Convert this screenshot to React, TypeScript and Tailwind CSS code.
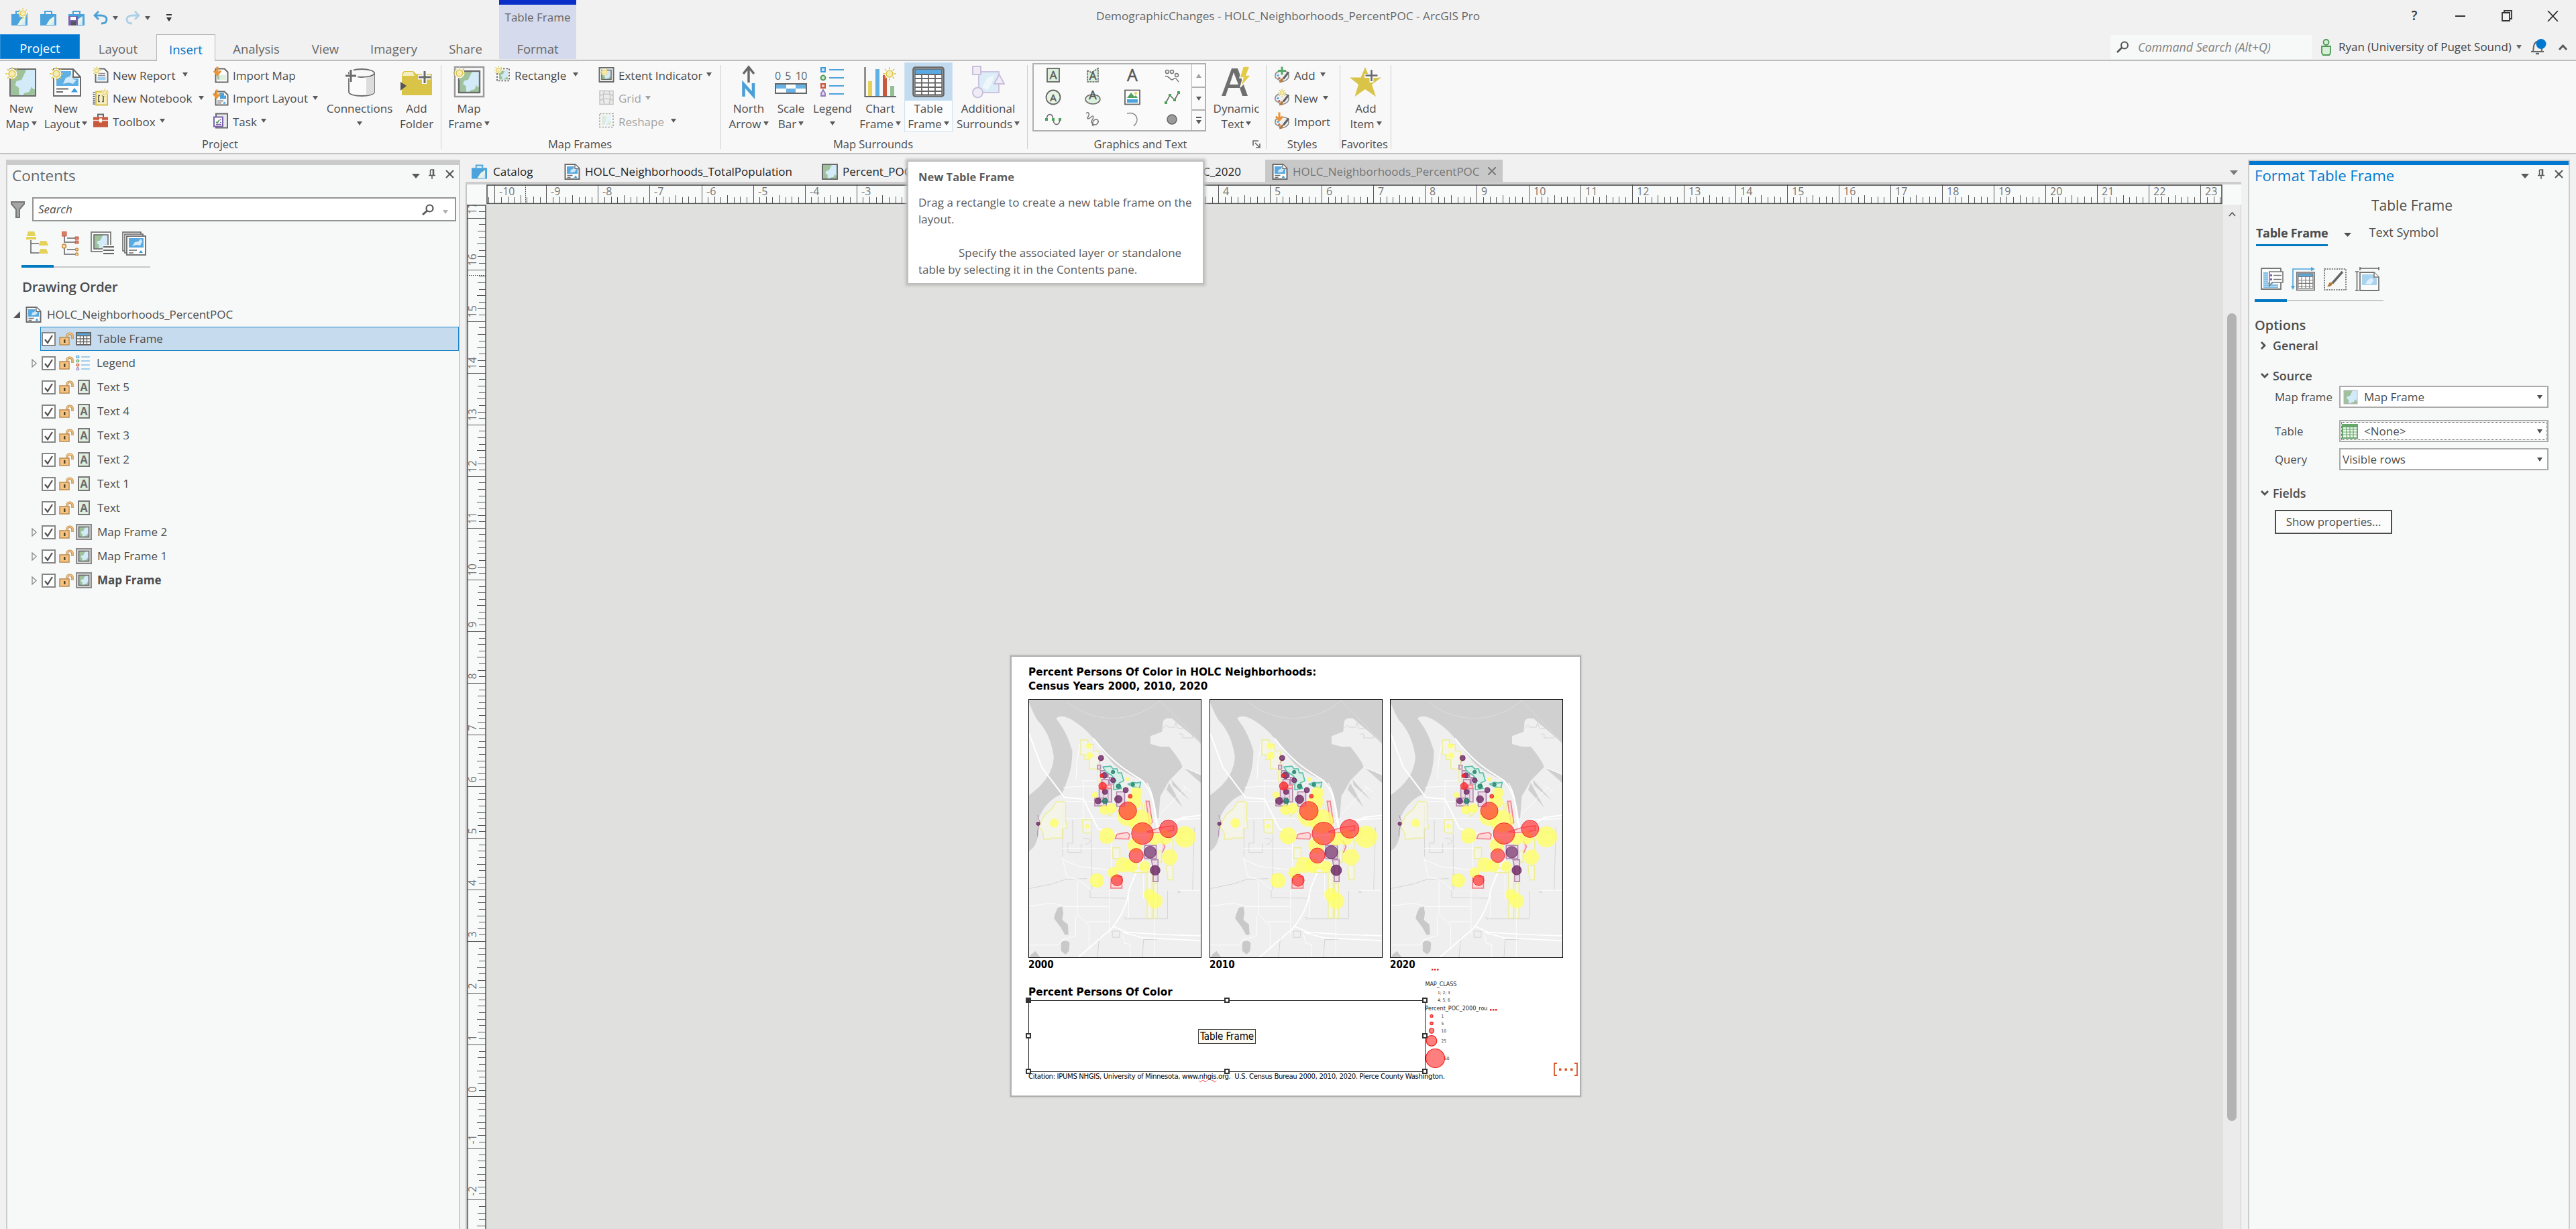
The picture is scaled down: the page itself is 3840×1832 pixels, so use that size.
import React from "react";

/* ---------- shared glyphs ---------- */

const GRAY = "#6a6a6a";

function Caret({ className = "text-[#5a5a5a]" }: { className?: string }) {
  return (
    <svg width="8" height="6" viewBox="0 0 8 6" className={`shrink-0 ${className}`}>
      <path d="M0 0h8l-4 6z" fill="currentColor" />
    </svg>
  );
}

function Sun({ x, y, r = 5 }: { x: number; y: number; r?: number }) {
  const rays = [0, 45, 90, 135, 180, 225, 270, 315];
  return (
    <g transform={`translate(${x} ${y})`}>
      <circle r={r * 1.5} fill="#fbfbf8" />
      {rays.map((a) => (
        <path key={a} d={`M0 ${-r * 1.35}V${-r * 1.95}`} transform={`rotate(${a})`} stroke="#d8c24a" strokeWidth={r * 0.34} />
      ))}
      <circle r={r} fill="#f7ecb0" stroke="#d8c24a" strokeWidth={r * 0.3} />
    </g>
  );
}

function MiniMap({ x, y, w, h, stroke = GRAY, sw = 2 }: { x: number; y: number; w: number; h: number; stroke?: string; sw?: number }) {
  return (
    <g transform={`translate(${x} ${y})`}>
      <rect width={w} height={h} fill="#9dc29c" />
      <path
        transform={`scale(${w / 20} ${h / 20})`}
        d="M13 0h7v15l-2 0-1-2-2 4-4 1-1 2-3-1 0-5-3-2 1-3 4-1 2-4 1-2z"
        fill="#d3eaf8"
      />
      <rect width={w} height={h} fill="none" stroke={stroke} strokeWidth={sw} />
    </g>
  );
}

function LayoutPage({ size, className = "" }: { size: number; className?: string }) {
  return (
    <svg width={size} height={size} viewBox="0 0 24 24" className={`shrink-0 ${className}`}>
      <path d="M1.500 1h15l6 6v16h-21z" fill="#fdfdfd" stroke={GRAY} strokeWidth="2" />
      <path d="M16 1v6.500h6.500" fill="#fdfdfd" stroke={GRAY} strokeWidth="1.300" />
      <path d="M4 4h11v4h5v7H4z" fill="#5aa9e0" />
      <path d="M9 13l1-4 3-1 2-3v3h3l-2 4-4 1z" fill="#cfe8f8" />
      <path d="M4.500 17.500h8M4.500 20.500h5" stroke={GRAY} strokeWidth="1.500" />
      <path d="M14.500 21l2.500-3.500 2.500 3.500z" fill="#3d9bdc" />
    </svg>
  );
}

function NewMapIcon() {
  return (
    <svg width="48" height="48" viewBox="0 0 48 48">
      <MiniMap x={7} y={5} w={38} h={40} />
      <Sun x={10} y={12} r={5} />
    </svg>
  );
}
function NewLayoutIcon() {
  return (
    <svg width="48" height="48" viewBox="0 0 48 48">
      <path d="M6 5h29l11 12v28H6z" fill="#fdfdfd" stroke={GRAY} strokeWidth="2" />
      <path d="M35 5v12h11" fill="none" stroke={GRAY} strokeWidth="2" />
      <path d="M10 8h22v11h11v11H10z" fill="#5fb0e4" />
      <path d="M20 27l4-9 6-2 3-5 1 9 6 1-5 6-7-2z" fill="#d3eaf8" />
      <path d="M10 34.500h18M10 39h10" stroke={GRAY} strokeWidth="2.200" />
      <path d="M32 39.500l5-6.500 5 6.500z" fill="#3d9bdc" />
      <Sun x={10} y={12} r={5} />
    </svg>
  );
}
function ConnectionsIcon() {
  return (
    <svg width="48" height="48" viewBox="0 0 48 48">
      <path d="M8 11v28c0 4 9 6 19 6s19-2 19-6V11z" fill="#fbfbfb" stroke={GRAY} strokeWidth="1.800" />
      <path d="M34 16v28c8-1 12-3 12-5V11z" fill="#dcdcdc" />
      <ellipse cx="27" cy="11" rx="19" ry="6" fill="#f8f8f8" stroke={GRAY} strokeWidth="1.800" />
      <path d="M2 15.500h19M11.500 5v20" stroke="#fafafa" strokeWidth="6" />
      <path d="M3 15h16M11 6v18" stroke={GRAY} strokeWidth="3" />
    </svg>
  );
}
function AddFolderIcon() {
  return (
    <svg width="50" height="48" viewBox="0 0 50 48">
      <path d="M3 44V12l3-4h14l4 4h24v32z" fill="#d9c447" />
      <path d="M4 13l3-4h12l3 6H4z" fill="#f6eec0" />
      <path d="M1 24l9 6-9 7z" fill="#555" />
      <path d="M27 17h19M36.500 8v19" stroke="#fafafa" strokeWidth="7" />
      <path d="M28 17h18M37 8v18" stroke={GRAY} strokeWidth="3" />
    </svg>
  );
}
function MapFrameBigIcon() {
  return (
    <svg width="48" height="50" viewBox="0 0 48 50">
      <rect x="3" y="3" width="43" height="44" fill="#fbfbfb" stroke="#9a9a9a" strokeWidth="2.500" />
      <MiniMap x={9} y={9} w={31} h={32} sw={2.4} />
      <Sun x={10} y={12} r={5} />
    </svg>
  );
}
function NorthArrowIcon() {
  return (
    <svg width="30" height="50" viewBox="0 0 30 50">
      <path d="M15 26V4M7 13l8-10 8 10" fill="none" stroke="#666" strokeWidth="3.400" />
      <path d="M7.500 47V28.500L22 45V27" fill="none" stroke="#4b9fd8" strokeWidth="4.600" />
    </svg>
  );
}
function ScaleBarIcon() {
  return (
    <div className="flex w-[50px] flex-col items-center">
      <div className="flex w-[48px] justify-between text-[16px] leading-[17px] text-[#666]">
        <span>0</span>
        <span>5</span>
        <span className="tracking-[-0.500px]">10</span>
      </div>
      <div className="mt-[2px] grid h-[16px] w-[48px] grid-cols-3 grid-rows-2 border-2 border-[#666] bg-white">
        <i className="bg-[#67b1e4]" />
        <i />
        <i className="bg-[#67b1e4]" />
        <i />
        <i className="bg-[#67b1e4]" />
        <i />
      </div>
    </div>
  );
}
function LegendIcon({ w = 38, h = 48 }: { w?: number; h?: number }) {
  return (
    <svg width={w} height={h} viewBox="0 0 38 48" preserveAspectRatio="none" className="shrink-0">
      <rect x="2" y="3" width="6" height="6" fill="#cfe8f8" stroke="#3d9bdc" strokeWidth="2" />
      <circle cx="5" cy="18" r="3.400" fill="#cfe8cf" stroke="#4d9a55" strokeWidth="2" />
      <rect x="2" y="27" width="6" height="6" fill="#f4c9bb" stroke="#c4573a" strokeWidth="2" />
      <path d="M2 45v-4l3-5 3 5v4z" fill="#ddd3ee" stroke="#8d77b8" strokeWidth="1.800" />
      <path d="M14 6h22M14 18h22M14 30h22M14 42h22" stroke="#4ba3dd" strokeWidth="2.200" />
    </svg>
  );
}
function ChartIcon() {
  return (
    <svg width="50" height="50" viewBox="0 0 50 50">
      <path d="M7 24h6v22H7z" fill="#e4d25a" />
      <path d="M18 6h6v40h-6z" fill="#5fb0e4" />
      <path d="M29 15h6v31h-6z" fill="#c9593d" />
      <path d="M40 31h6v15h-6z" fill="#93bf94" />
      <path d="M2.500 3v44H49" fill="none" stroke="#666" strokeWidth="2.200" />
      <Sun x={39} y={13} r={5} />
    </svg>
  );
}
function TableGlyph({ w, h, className = "" }: { w: number; h: number; className?: string }) {
  return (
    <svg width={w} height={h} viewBox="0 0 48 46" preserveAspectRatio="none" className={`shrink-0 ${className}`}>
      <rect x="1.500" y="1.500" width="45" height="43" rx="3" fill="#fff" stroke="#666" strokeWidth="2.600" />
      <rect x="4" y="4" width="40" height="7" fill="#5aa9e0" />
      <path d="M4 12h40M4 18h40M4 24.500h40M4 31h40M4 37h40M14 12v31M24 12v31M34 12v31" stroke="#666" strokeWidth="1.800" />
      <rect x="4" y="4" width="40" height="38" fill="none" stroke="#666" strokeWidth="1.500" />
    </svg>
  );
}
function SmallTableGlyph() {
  return (
    <svg width="23" height="20" viewBox="0 0 23 20" className="ml-[3px] shrink-0">
      <rect x="1" y="1" width="21" height="18" fill="#fff" />
      <rect x="1" y="1" width="21" height="4" fill="#5aa9e0" />
      <path d="M1 5.500h21M1 10h21M1 14.500h21M6.500 5v14M11.500 5v14M16.500 5v14" stroke="#666" strokeWidth="1.300" />
      <rect x="1" y="1" width="21" height="18" fill="none" stroke="#666" strokeWidth="2" />
    </svg>
  );
}
function SurroundsIcon() {
  return (
    <svg width="50" height="50" viewBox="0 0 50 50">
      <rect x="11" y="10" width="30" height="31" fill="#dcedf7" stroke="#cdc3e0" strokeWidth="2" />
      <path d="M16 33l8-14 10-4-4 13-6 9z" fill="#f0f7fc" />
      <rect x="2" y="2" width="12" height="12" fill="#f0ecf6" stroke="#c9bfdd" strokeWidth="2" />
      <path d="M34 28l7.500-14L49 28z" fill="#f0ecf6" stroke="#c9bfdd" strokeWidth="2" />
      <circle cx="9.500" cy="41" r="7.500" fill="#f0ecf6" stroke="#c9bfdd" strokeWidth="2" />
    </svg>
  );
}
function DynamicTextIcon() {
  return (
    <svg width="48" height="50" viewBox="0 0 48 50">
      <path d="M2 46h6l4-12h17l4 12h8L26 5h-9zM14 29l6-18 7 18z" fill="#6e6e6e" fillRule="evenodd" />
      <path d="M34 2h10l-5 13h7L30 33l4-14h-5z" fill="#e2cb45" stroke="#fafafa" strokeWidth="1.500" />
    </svg>
  );
}
function StarIcon() {
  return (
    <svg width="50" height="50" viewBox="0 0 50 50">
      <path d="M24 3l6.500 15.500H48L34 29l6 18-16-11L8.500 47 14 29 1 18.500h16.500z" fill="#d9c447" />
      <path d="M23 16h21M33.500 5v21" stroke="#fafafa" strokeWidth="6" />
      <path d="M24.500 15.500h18M33.500 7v17" stroke={GRAY} strokeWidth="2.600" />
    </svg>
  );
}

/* small 24px icons of the ribbon rows */
function SmallIcon({ name }: { name: string }) {
  const page = <path d="M4.500 3h13l5 5v15h-18z" fill="#fdfdfd" stroke={GRAY} strokeWidth="2" />;
  const palette = (
    <g>
      <path d="M13 6C6 6 1 9 2 15c1 4 5 3 6 5s1 3 5 2c6-1 10-5 9-10-1-4-4-6-9-6z" fill="#f0f0f0" stroke="#8a8a8a" strokeWidth="1.600" />
      <circle cx="6" cy="13" r="1.600" fill="#4ba3dd" />
      <circle cx="8" cy="17" r="1.600" fill="#c9593d" />
      <path d="M22 8l-8 10" stroke="#5f5f5f" strokeWidth="3" />
      <path d="M15 17l-3 6-4 1 2-6z" fill="#b5793a" />
    </g>
  );
  const icons: Record<string, React.ReactNode> = {
    report: (
      <g>
        {page}
        <path d="M8 10h11M8 13h11" stroke="#8a8a8a" strokeWidth="1.300" />
        <rect x="7.500" y="15" width="12" height="5" fill="#9fd0ef" />
        <Sun x={6} y={6} r={3.2} />
      </g>
    ),
    notebook: (
      <g>
        <path d="M5 3h17v20H5z" fill="#f7efc0" stroke="#d8c24a" strokeWidth="2" />
        <path d="M2 4v19" stroke="#555" strokeWidth="3" strokeDasharray="1.500 1.300" />
        <path d="M11 9H9v9h2M14 9h2v9h-2" fill="none" stroke="#555" strokeWidth="1.600" />
        <Sun x={18} y={5} r={3.2} />
      </g>
    ),
    toolbox: (
      <g>
        <path d="M1 6h22v15H1z" fill="#c9593d" />
        <path d="M8 6V2h8v4" fill="none" stroke="#666" strokeWidth="2" />
        <path d="M1 11h22" stroke="#f2ddd6" strokeWidth="1.600" />
        <path d="M10 8h4v6h-4z" fill="#fff" />
      </g>
    ),
    importmap: (
      <g>
        {page}
        <path d="M7 12h13v8H7z" fill="#dff0df" />
        <path d="M7 13h3v6H7z" fill="#9dc29c" />
        <path d="M7 0v10M2 6l5 6 5-6" fill="none" stroke="#eb9438" strokeWidth="3.200" />
      </g>
    ),
    importlayout: (
      <g>
        {page}
        <path d="M10 5h7v4h3v5h-9z" fill="#4ba3dd" />
        <path d="M7 17h9M7 20h6" stroke={GRAY} strokeWidth="1.400" />
        <path d="M15 21l2.500-3 2.500 3z" fill="#3d9bdc" />
        <path d="M6 0v10M1 6l5 6 5-6" fill="none" stroke="#eb9438" strokeWidth="3" />
      </g>
    ),
    task: (
      <g>
        <path d="M5 1h17v21H5z" fill="#e9e9e9" stroke={GRAY} strokeWidth="2" />
        <path d="M2 6h13v14H2z" fill="#fff" stroke="#7a62ad" strokeWidth="2" />
        <path d="M5 13l2 2 3-5" fill="none" stroke="#4d9a55" strokeWidth="1.600" />
        <path d="M11 10h2M11 14h2M5 17h8" stroke="#7a62ad" strokeWidth="1.300" />
      </g>
    ),
    rectangle: (
      <g>
        <MiniMap x={7} y={6} w={13} h={13} sw={0} />
        <rect x="4" y="3" width="18" height="18" fill="none" stroke="#555" strokeWidth="1.600" strokeDasharray="2.500 2" />
        <Sun x={6} y={5} r={3.2} />
      </g>
    ),
    extent: (
      <g>
        <rect x="1.500" y="1.500" width="21" height="21" fill="#fff" stroke={GRAY} strokeWidth="2" />
        <MiniMap x={5} y={5} w={14} h={14} sw={1.6} />
        <Sun x={9} y={8} r={3.2} />
      </g>
    ),
    grid: (
      <g stroke="#c4c4c4" fill="none" strokeWidth="1.500">
        <rect x="2" y="2" width="20" height="20" fill="#ececec" />
        <path d="M2 9c6-3 14-3 20 0M2 16c6-3 14-3 20 0M9 2c-2 6-2 14 0 20M16 2c2 6 2 14 0 20" />
      </g>
    ),
    reshape: (
      <g>
        <rect x="5" y="4" width="14" height="14" fill="#dcebdc" />
        <path d="M12 4h7v8l-4 1-3 5-3-1 2-6z" fill="#e6f3fa" />
        <rect x="2" y="1" width="20" height="20" fill="none" stroke="#a0a0a0" strokeWidth="1.600" strokeDasharray="2.500 2" />
      </g>
    ),
    styleadd: (
      <g>
        {palette}
        <path d="M6 6h12M12 0v12" stroke="#52a866" strokeWidth="3" />
      </g>
    ),
    stylenew: (
      <g>
        {palette}
        <Sun x={12} y={5} r={3.2} />
      </g>
    ),
    styleimport: (
      <g>
        {palette}
        <path d="M8 -1v10M3 5l5 6 5-6" fill="none" stroke="#eb9438" strokeWidth="3" />
      </g>
    ),
  };
  return (
    <svg width="24" height="25" viewBox="0 0 24 24" className="-mt-[2px] shrink-0 overflow-visible">
      {icons[name]}
    </svg>
  );
}

/* ---------- ribbon ---------- */

type BigProps = { icon: React.ReactNode; lines: string[]; caret?: boolean; className?: string; active?: boolean };

function BigButton({ icon, lines, caret = true, className = "", active = false }: BigProps) {
  return (
    <div className={`mt-[2px] flex h-[104px] shrink-0 flex-col items-center ${active ? "border border-[#cfe2f2] bg-[#fafcfd]" : "border border-transparent"} ${className}`}>
      <div className={`flex h-[56px] w-full shrink-0 items-center justify-center ${active ? "bg-[#c3dbee]" : ""}`}>{icon}</div>
      {lines.map((t, i) => (
        <div key={i} className="flex h-[23px] items-center gap-[3px] whitespace-nowrap text-[17px] leading-[23px]">
          {t && <span>{t}</span>}
          {caret && i === lines.length - 1 && <Caret className="-mt-[2px] text-[#5a5a5a]" />}
        </div>
      ))}
    </div>
  );
}

function SmallRow({ icon, text, caret = true, gap = "gap-[10px]", dim = false }: { icon: string; text: string; caret?: boolean; gap?: string; dim?: boolean }) {
  return (
    <div className={`flex h-[34.5px] items-center whitespace-nowrap text-[17px] ${dim ? "text-[#a3a3a3]" : ""}`}>
      <SmallIcon name={icon} />
      <div className={`ml-[6px] flex items-center ${gap}`}>
        <span>{text}</span>
        {caret && <Caret className={dim && text === "Grid" ? "-mt-[2px] text-[#a3a3a3]" : "-mt-[2px] text-[#5a5a5a]"} />}
      </div>
    </div>
  );
}

function Group({ label, className, children, launcher = false }: { label: string; className: string; children: React.ReactNode; launcher?: boolean }) {
  return (
    <div className={`relative flex h-[137px] shrink-0 flex-col ${className}`}>
      <div className="flex h-[112px] shrink-0">{children}</div>
      <div className="flex h-[24px] items-center justify-center whitespace-nowrap pr-[4px] text-[16.500px]">{label}</div>
      <div className="absolute right-0 top-[6px] h-[125px] w-px bg-[#cfcfcf]" />
      {launcher && (
        <svg width="12" height="12" viewBox="0 0 12 12" className="absolute right-[9px] top-[118px]">
          <path d="M1 8V1h8M4 4l6 6M11 5v6H5" fill="none" stroke="#666" strokeWidth="1.600" />
        </svg>
      )}
    </div>
  );
}

function GalleryIcon({ i }: { i: number }) {
  const A = ({ y = 18, s = 17 }: { y?: number; s?: number }) => (
    <text x="12" y={y} fontSize={s} textAnchor="middle" fill="#555" stroke="#555" strokeWidth=".5">
      A
    </text>
  );
  const list: React.ReactNode[] = [
    <g><rect x="3" y="2" width="18" height="20" fill="#dcefdc" stroke="#666" strokeWidth="1.800" /><A /></g>,
    <g><path d="M4 5l6 3 10-6v20H4z" fill="#dcefdc" stroke="#666" strokeWidth="1.600" strokeDasharray="3 1" /><A y={19} /></g>,
    <A y={21} s={25} />,
    <g fill="none" stroke="#777" strokeWidth="1.500"><circle cx="5" cy="7" r="2.500" /><circle cx="12" cy="7" r="2.500" /><circle cx="19" cy="12" r="2.500" /><path d="M2 14c5-3 8 8 12 4s5 1 8 4" /></g>,
    <g><circle cx="12" cy="12" r="10.500" fill="#e6f4e6" stroke="#666" strokeWidth="1.800" /><A y={17.5} s={15} /></g>,
    <g><path d="M12 8c8 0 11 4 11 7s-4 7-11 7-11-4-11-7 3-7 11-7z" fill="#dcefdc" stroke="#666" strokeWidth="1.600" /><A y={15} s={18} /></g>,
    <g><rect x="1" y="1.500" width="22" height="21" fill="#fff" stroke="#666" strokeWidth="1.800" /><path d="M4 13l6-8 5 6 2-2 3 4z" fill="#4fa05a" /><path d="M4 15h16v5H4z" fill="#4ba3dd" /><circle cx="17" cy="6" r="2" fill="#e8cf45" /></g>,
    <g><path d="M3 20l6-11 7 7 6-11" fill="none" stroke="#666" strokeWidth="1.600" /><path d="M1 18h4v4H1zM7 7h4v4H7zM14 14h4v4h-4zM20 3h4v4h-4z" fill="#4fa05a" /></g>,
    <g><path d="M2 12c1-10 9-10 10 0s9 10 10 0" fill="none" stroke="#666" strokeWidth="1.500" /><path d="M0 10h4v4H0zM10 10h4v4h-4zM20 10h4v4h-4z" fill="#4fa05a" /></g>,
    <path d="M2 3c3-3 6 0 3 5s2 3 5 0 4 1 1 5 3 9 7 6 2-8-2-7-6 8-3 10" fill="none" stroke="#777" strokeWidth="1.500" />,
    <path d="M4 3c14-3 20 10 10 19" fill="none" stroke="#888" strokeWidth="1.600" />,
    <ellipse cx="12" cy="12" rx="7" ry="7" fill="#9b9b9b" stroke="#666" strokeWidth="1.500" />,
  ];
  return (
    <svg width="24" height="24" viewBox="0 0 24 24" className="overflow-visible">
      {list[i]}
    </svg>
  );
}

function Gallery() {
  return (
    <div className="ml-[7px] mt-[3px] flex h-[102px] w-[259px] shrink-0 border-2 border-[#b0b0b0] bg-[#fafafa]">
      <div className="grid w-[235px] grid-cols-4 grid-rows-3 place-items-center">
        {Array.from({ length: 12 }, (_, i) => (
          <GalleryIcon key={i} i={i} />
        ))}
      </div>
      <div className="flex w-[20px] flex-col border-l border-[#b8b8b8]">
        <div className="flex h-[33px] items-center justify-center bg-[#fcfcfc]">
          <Caret className="rotate-180 text-[#a0a0a0]" />
        </div>
        <div className="flex h-[34px] items-center justify-center border-t-2 border-[#b0b0b0]">
          <Caret />
        </div>
        <div className="flex flex-1 flex-col items-center justify-center gap-[3px] border-t-2 border-[#b0b0b0]">
          <div className="h-[2px] w-2 bg-[#5a5a5a]" />
          <Caret />
        </div>
      </div>
    </div>
  );
}

function Ribbon() {
  return (
    <div className="flex h-[139px] w-full border-b-2 border-[#c2c2c2] bg-[#f8f8f8]">
      <Group label="Project" className="w-[658px] pl-[2px]">
        <BigButton className="w-[59px]" icon={<NewMapIcon />} lines={["New", "Map"]} />
        <BigButton className="ml-[3px] w-[68px]" icon={<NewLayoutIcon />} lines={["New", "Layout"]} />
        <div className="ml-[6px] mt-[4px] w-[177px]">
          <SmallRow icon="report" text="New Report" />
          <SmallRow icon="notebook" text="New Notebook" />
          <SmallRow icon="toolbox" text="Toolbox" gap="gap-[6px]" />
        </div>
        <div className="ml-[2px] mt-[4px] w-[166px]">
          <SmallRow icon="importmap" text="Import Map" caret={false} />
          <SmallRow icon="importlayout" text="Import Layout" gap="gap-[7px]" />
          <SmallRow icon="task" text="Task" gap="gap-[6px]" />
        </div>
        <BigButton className="ml-[2px] w-[102px]" icon={<ConnectionsIcon />} lines={["Connections", ""]} />
        <BigButton className="ml-[5px] w-[58px]" icon={<AddFolderIcon />} lines={["Add", "Folder"]} caret={false} />
      </Group>
      <Group label="Map Frames" className="w-[417px]">
        <BigButton className="ml-[7px] w-[68px]" icon={<MapFrameBigIcon />} lines={["Map", "Frame"]} />
        <div className="ml-[4px] mt-[4px] w-[154px]">
          <SmallRow icon="rectangle" text="Rectangle" />
        </div>
        <div className="ml-[1px] mt-[4px]">
          <SmallRow icon="extent" text="Extent Indicator" gap="gap-[5px]" />
          <SmallRow icon="grid" text="Grid" gap="gap-[6px]" dim />
          <SmallRow icon="reshape" text="Reshape" dim />
        </div>
      </Group>
      <Group label="Map Surrounds" className="w-[457px]">
        <BigButton className="ml-[7px] w-[68px]" icon={<NorthArrowIcon />} lines={["North", "Arrow"]} />
        <BigButton className="w-[58px]" icon={<ScaleBarIcon />} lines={["Scale", "Bar"]} />
        <BigButton className="ml-[1px] w-[64px]" icon={<LegendIcon />} lines={["Legend", ""]} />
        <BigButton className="ml-[5px] w-[68px]" icon={<ChartIcon />} lines={["Chart", "Frame"]} />
        <BigButton className="ml-[2px] w-[72px]" icon={<TableGlyph w={48} h={46} />} lines={["Table", "Frame"]} active />
        <BigButton className="ml-[1px] w-[104px]" icon={<SurroundsIcon />} lines={["Additional", "Surrounds"]} />
      </Group>
      <Group label="Graphics and Text" className="w-[356px] pr-[16px]" launcher>
        <Gallery />
        <BigButton className="ml-[5px] w-[80px]" icon={<DynamicTextIcon />} lines={["Dynamic", "Text"]} />
      </Group>
      <Group label="Styles" className="w-[110px]">
        <div className="ml-[11px] mt-[4px]">
          <SmallRow icon="styleadd" text="Add" gap="gap-[7px]" />
          <SmallRow icon="stylenew" text="New" gap="gap-[7px]" />
          <SmallRow icon="styleimport" text="Import" caret={false} />
        </div>
      </Group>
      <Group label="Favorites" className="w-[76px]">
        <BigButton className="ml-[3px] w-[70px]" icon={<StarIcon />} lines={["Add", "Item"]} />
      </Group>
    </div>
  );
}

/* ---------- title bar and tabs ---------- */

function CatalogCase({ kind, w = 24 }: { kind: "new" | "open" | "save"; w?: number }) {
  return (
    <svg width={w} height="24" viewBox="0 0 24 24" className="shrink-0 overflow-visible">
      <path d="M7 6V2h10v4" fill="none" stroke="#4ba3dd" strokeWidth="2" />
      <path d="M0 6h24v17H0z" fill="#4ba3dd" />
      <path d="M9 22l5-8 7-5v13z" fill="#e9f4e4" />
      <path d="M15 22l6-8v8z" fill="#d3eaf8" />
      {kind === "new" && <Sun x={17} y={5} r={4} />}
      {kind === "save" && (
        <g>
          <path d="M0 9h14v14H0z" fill="#7a62ad" />
          <path d="M3 10h8v5H3z" fill="#fff" />
          <path d="M4 17h7v6H4z" fill="#555" />
        </g>
      )}
    </svg>
  );
}

function Undo({ flip = false }: { flip?: boolean }) {
  return (
    <svg width="22" height="21" viewBox="0 0 22 21" className={flip ? "-scale-x-100 opacity-40" : ""}>
      <path d="M8 1L2 7l6 6M2 7h9c5 0 9 2 9 6s-3 6-8 6" fill="none" stroke="#4b9fd8" strokeWidth="2.800" />
    </svg>
  );
}

function TitleBar() {
  return (
    <div className="flex h-[51px] w-full">
      <div className="flex h-[51px] w-[744px] items-center pl-[17px] pt-[2px]">
        <CatalogCase kind="new" />
        <div className="w-[19px]" />
        <CatalogCase kind="open" />
        <div className="w-[18px]" />
        <CatalogCase kind="save" />
        <div className="w-[13px]" />
        <Undo />
        <div className="w-[7px]" />
        <Caret />
        <div className="w-[11px]" />
        <Undo flip />
        <div className="w-[7px]" />
        <Caret />
        <div className="ml-[24px] flex flex-col items-center gap-[3px]">
          <div className="h-[2px] w-2 bg-[#333]" />
          <Caret className="text-[#333]" />
        </div>
      </div>
      <div className="h-[51px] w-[115px] border-t-[7px] border-[#0a2fc9] bg-[#d5daec] pt-[7px] text-center text-[17px] leading-[24px] text-[#666]">Table Frame</div>
      <div className="flex flex-1 items-center pb-[4px] pl-[775px] text-[17.200px] text-[#666]">
        <span className="whitespace-nowrap">DemographicChanges - HOLC_Neighborhoods_PercentPOC - ArcGIS Pro</span>
      </div>
      <div className="flex w-[275px] items-center pb-[4px] text-[#333]">
        <span className="ml-[27px] w-[14px] text-center text-[19px] font-semibold leading-none">?</span>
        <svg width="15" height="14" viewBox="0 0 15 14" className="ml-[54px]">
          <path d="M0 7h15" stroke="#333" strokeWidth="2" />
        </svg>
        <svg width="16" height="17" viewBox="0 0 16 17" className="ml-[54px]">
          <path d="M1 4h11v12H1zM4 4V1h11v12h-3" fill="none" stroke="#333" strokeWidth="1.800" />
        </svg>
        <svg width="17" height="16" viewBox="0 0 17 16" className="ml-[52px]">
          <path d="M1 0l15 16M16 0L1 16" stroke="#333" strokeWidth="1.800" />
        </svg>
      </div>
    </div>
  );
}

function MenuTabs() {
  return (
    <div className="flex h-[40px] w-full border-b-2 border-[#bdbdbd] text-[18.500px] text-[#666]">
      <div className="flex h-[37px] w-[119px] items-center justify-center border border-[#2f8fdc] bg-[#0078d0] pt-[5px] text-white">Project</div>
      <div className="flex h-[38px] w-[114px] items-center justify-center pt-[6px]">Layout</div>
      <div className="-mb-[2px] flex h-[40px] w-[88px] items-center justify-center border border-b-0 border-[#b8b8b8] bg-[#f8f8f8] pt-[4px] text-[#0072c6]">Insert</div>
      <div className="flex h-[38px] w-[122px] items-center justify-center pt-[6px]">Analysis</div>
      <div className="flex h-[38px] w-[84px] items-center justify-center pt-[6px]">View</div>
      <div className="flex h-[38px] w-[120px] items-center justify-center pt-[6px]">Imagery</div>
      <div className="flex h-[38px] w-[94px] items-center justify-center pt-[6px]">Share</div>
      <div className="ml-[3px] flex h-[37px] w-[115px] items-center justify-center bg-[#d5daec] pt-[6px]">Format</div>
      <div className="ml-auto flex h-[38px] items-center whitespace-nowrap">
        <div className="flex h-[36px] w-[300px] items-center bg-[#f7f9f8] pl-[9px]">
          <svg width="19" height="18" viewBox="0 0 19 18">
            <circle cx="12" cy="6.500" r="5" fill="none" stroke="#555" strokeWidth="2" />
            <path d="M8 10l-7 7" stroke="#555" strokeWidth="2.600" />
          </svg>
          <span className="ml-[13px] text-[17.800px] italic text-[#808080]">Command Search (Alt+Q)</span>
        </div>
        <svg width="17" height="25" viewBox="0 0 17 25" className="ml-[13px]">
          <circle cx="8.500" cy="5" r="4" fill="#d9eed9" stroke="#4d9a55" strokeWidth="1.800" />
          <path d="M2 11h13v10l-2 3H4l-2-3z" fill="#d9eed9" stroke="#4d9a55" strokeWidth="1.800" />
        </svg>
        <span className="ml-[10px] w-[261px] text-[17px] text-[#444]">Ryan (University of Puget Sound)</span>
        <Caret className="ml-[4px] text-[#666]" />
        <svg width="24" height="26" viewBox="0 0 24 26" className="ml-[13px]">
          <path d="M1 20h19M4 20c1-5 0-13 6-15s7 8 7 15" fill="none" stroke="#666" strokeWidth="2" />
          <path d="M8 23h5" stroke="#666" strokeWidth="2.400" />
          <circle cx="16" cy="8.500" r="7.500" fill="#0078d0" />
        </svg>
        <svg width="13" height="9" viewBox="0 0 13 9" className="ml-[18px] mr-[13px]">
          <path d="M1 8l5.500-6L12 8" fill="none" stroke="#555" strokeWidth="2.800" />
        </svg>
      </div>
    </div>
  );
}

/* ---------- panel chrome ---------- */

function PanelButtons() {
  return (
    <div className="ml-auto flex items-center">
      <svg width="12" height="7" viewBox="0 0 12 7"><path d="M0 0h12L6 7z" fill="#5a5a5a" /></svg>
      <svg width="10" height="15" viewBox="0 0 10 15" className="mb-[6px] ml-[13px]">
        <path d="M2.500 1v8M2.500 1h5v8M6.500 1v8M0 9.500h10M5 10v5" fill="none" stroke="#5a5a5a" strokeWidth="1.500" />
      </svg>
      <svg width="13" height="13" viewBox="0 0 13 13" className="mb-[6px] ml-[15px]">
        <path d="M1 1l11 11M12 1L1 12" stroke="#555" strokeWidth="2" />
      </svg>
    </div>
  );
}

function Lock() {
  return (
    <svg width="22" height="20" viewBox="0 0 22 20" className="ml-[5px] shrink-0">
      <path d="M12 8V6c0-5 8-5 8 0v4" fill="none" stroke="#c4924f" strokeWidth="3.600" />
      <path d="M12 8V6c0-5 8-5 8 0v3.500" fill="none" stroke="#f3c98c" strokeWidth="1.400" />
      <rect x="1" y="8" width="14" height="11" fill="#f3c285" stroke="#c08f50" strokeWidth="1.600" />
      <path d="M7 11h2.500v5H7z" fill="#5a4320" />
    </svg>
  );
}

function TextIcon() {
  return (
    <div className="ml-[6px] flex h-[22px] w-[18px] shrink-0 items-center justify-center border-2 border-[#777] bg-[#e0eee0] text-[16px] font-bold leading-[18px] text-[#6a6a6a]">A</div>
  );
}

type Row = { name: string; kind: "table" | "legend" | "text" | "map"; bold?: boolean };
const ROWS: Row[] = [
  { name: "Table Frame", kind: "table" },
  { name: "Legend", kind: "legend" },
  { name: "Text 5", kind: "text" },
  { name: "Text 4", kind: "text" },
  { name: "Text 3", kind: "text" },
  { name: "Text 2", kind: "text" },
  { name: "Text 1", kind: "text" },
  { name: "Text", kind: "text" },
  { name: "Map Frame 2", kind: "map" },
  { name: "Map Frame 1", kind: "map" },
  { name: "Map Frame", kind: "map", bold: true },
];

function TreeRow({ row }: { row: Row }) {
  const expandable = row.kind === "map" || row.kind === "legend";
  const selected = row.kind === "table";
  return (
    <div className="flex h-[36px] items-center pl-[36px]">
      <svg width="8" height="13" viewBox="0 0 8 13" className="mr-[5px] shrink-0">
        {expandable && <path d="M1 1v11l6-5.500z" fill="#fff" stroke="#888" strokeWidth="1.300" />}
      </svg>
      <div className={`flex h-[36px] w-[624px] items-center border ${selected ? "border-[#1d84c8] bg-[#c6dbee]" : "border-transparent"}`}>
        <div className="ml-[1px] flex size-[21px] shrink-0 items-center justify-center border-2 border-[#868686] bg-white">
          <svg width="15" height="15" viewBox="0 0 15 15"><path d="M2 8l4 5 7-11" fill="none" stroke="#505050" strokeWidth="2.200" /></svg>
        </div>
        <Lock />
        {row.kind === "table" && <SmallTableGlyph />}
        {row.kind === "legend" && <span className="ml-[3px]"><LegendIcon w={22} h={24} /></span>}
        {row.kind === "text" && <TextIcon />}
        {row.kind === "map" && (
          <svg width="24" height="24" viewBox="0 0 24 24" className="ml-[3px] shrink-0">
            <rect x="1" y="1" width="22" height="22" fill="#d8d8d8" stroke="#8a8a8a" strokeWidth="2" />
            <MiniMap x={4.5} y={4.5} w={15} h={15} sw={1.6} />
          </svg>
        )}
        <span className={`whitespace-nowrap ${row.kind === "text" ? "ml-[11px]" : row.kind === "map" ? "ml-[8px]" : row.kind === "legend" ? "ml-[9px]" : "ml-[9px]"} ${row.bold ? "font-bold" : ""}`}>{row.name}</span>
      </div>
    </div>
  );
}

function ContentsPanel() {
  return (
    <div className="ml-[9px] mt-[8px] flex w-[677px] shrink-0 flex-col border-2 border-b-0 border-[#cdcdcd] bg-[#f7f9f8] text-[17px]">
      <div className="h-[6px] shrink-0 bg-[#cacaca]" />
      <div className="flex h-[32px] shrink-0 items-center pl-[7px] pr-[7px]">
        <span className="text-[22.500px] text-[#666]">Contents</span>
        <PanelButtons />
      </div>
      <div className="mt-[16px] flex h-[36px] shrink-0 items-center pl-[5px]">
        <svg width="21" height="26" viewBox="0 0 21 26">
          <path d="M1 2h19v3l-7 8v12H8V13L1 5z" fill="#a5a5a5" stroke="#777" strokeWidth="2" />
        </svg>
        <div className="ml-[11px] flex h-[36px] w-[632px] items-center border-2 border-[#949494] bg-white pl-[7px] pr-[10px]">
          <span className="text-[17px] italic">Search</span>
          <svg width="18" height="17" viewBox="0 0 18 17" className="ml-auto">
            <circle cx="11.500" cy="6.500" r="5" fill="none" stroke="#555" strokeWidth="2.200" />
            <path d="M8 10l-7 6" stroke="#555" strokeWidth="2.800" />
          </svg>
          <Caret className="ml-[13px] mt-2 text-[#b0b0b0]" />
        </div>
      </div>
      <div className="ml-[21px] mt-[8px] flex h-[57px] w-[192px] shrink-0 pt-[7px]">
        <svg width="34" height="36" viewBox="0 0 34 36" className="ml-[7px]">
          <path d="M7 13v19h13M7 18h12" fill="none" stroke="#666" strokeWidth="1.600" />
          <path d="M3 0h9l3 9v3H0V9zM21 14h9l3 6v1H19v-1zM21 26h9l3 7H19z" fill="#e4d25a" />
          <path d="M0 7.500h15" stroke="#fff" strokeWidth="1" />
        </svg>
        <svg width="26" height="36" viewBox="0 0 26 36" className="ml-[19px]">
          <path d="M4 6v10h17M8 10h12M4 24v10h17M8 27h12" fill="none" stroke="#666" strokeWidth="1.600" />
          <path d="M0 0h7v7H0zM20 8h5v4h-5zM20 14h5v4h-5z" fill="#d97f68" stroke="#c4573a" strokeWidth="1" />
          <circle cx="3.500" cy="22" r="3" fill="#f6dfae" stroke="#c98b3a" strokeWidth="1.500" />
          <circle cx="22.500" cy="27" r="2" fill="#f6dfae" stroke="#c98b3a" strokeWidth="1.300" />
          <circle cx="22.500" cy="34" r="2" fill="#f6dfae" stroke="#c98b3a" strokeWidth="1.300" />
        </svg>
        <svg width="36" height="36" viewBox="0 0 36 36" className="ml-[17px]">
          <rect x="1" y="1" width="29" height="29" fill="#fbfbfb" stroke="#7a7a7a" strokeWidth="1.800" />
          <MiniMap x={5} y={5} w={21} h={21} sw={1.6} />
          <path d="M18 20h18v16H18z" fill="#f7f9f8" />
          <path d="M19 23h16M19 28h16M19 33h16" stroke="#666" strokeWidth="1.800" />
        </svg>
        <svg width="36" height="36" viewBox="0 0 36 36" className="ml-[11px]">
          <rect x="1" y="1" width="27" height="28" fill="#fbfbfb" stroke="#666" strokeWidth="1.600" />
          <rect x="4" y="4" width="27" height="28" fill="#fbfbfb" stroke="#666" strokeWidth="1.600" />
          <rect x="7" y="7" width="28" height="28" fill="#fff" stroke="#666" strokeWidth="1.800" />
          <path d="M10 10h22v14H10z" fill="#5aa9e0" />
          <path d="M15 22l4-6 5-1 4-4 2 4-3 6-6-1z" fill="#d3eaf8" />
          <path d="M10 28h12M10 32h7" stroke="#666" strokeWidth="1.600" />
          <path d="M25 32l3-4 3 4z" fill="#3d9bdc" />
        </svg>
      </div>
      <div className="ml-[21px] flex h-[4px] w-[192px] shrink-0">
        <div className="w-[48px] bg-[#0079c1]" />
        <div className="mt-[2px] h-[2px] flex-1 bg-[#c8c8c8]" />
      </div>
      <div className="ml-[22px] mt-[12px] h-[32px] shrink-0 text-[20.500px] font-semibold leading-[32px] tracking-[-0.300px]">Drawing Order</div>
      <div className="mt-[7px] flex h-[38px] shrink-0 items-center pl-[9px]">
        <svg width="10" height="10" viewBox="0 0 10 10"><path d="M0 10L10 0v10z" fill="#555" /></svg>
        <LayoutPage size={24} className="ml-[8px]" />
        <span className="ml-[8px] tracking-[-0.050px]">HOLC_Neighborhoods_PercentPOC</span>
      </div>
      <div className="-mt-[1px]">
        {ROWS.map((r) => (
          <TreeRow key={r.name} row={r} />
        ))}
      </div>
    </div>
  );
}

/* ---------- format panel ---------- */

function Chevron({ open }: { open: boolean }) {
  return (
    <svg width="12" height="12" viewBox="0 0 12 12" className="mr-[6px] shrink-0">
      <path d={open ? "M1 3l5 5 5-5" : "M1 1l5 5-5 5"} fill="none" stroke="#505050" strokeWidth="2.800" />
    </svg>
  );
}

function SelectRow({ label, value, icon, focus = false, className }: { label: string; value: string; icon?: React.ReactNode; focus?: boolean; className: string }) {
  return (
    <div className={`flex h-[33px] shrink-0 items-center pl-[38px] ${className}`}>
      <span className="w-[96px] whitespace-nowrap text-[16.800px]">{label}</span>
      <div className="flex h-[33px] w-[312px] items-center border-2 border-[#ababab] bg-white p-[1px]">
        <div className={`flex h-full w-full items-center pl-[2px] pr-[5px] ${focus ? "border border-dotted border-[#555]" : "border border-transparent"}`}>
          {icon}
          <span className={icon ? "ml-[9px]" : "-ml-[1px]"}>{value}</span>
          <Caret className="ml-auto" />
        </div>
      </div>
    </div>
  );
}

function FormatPanel() {
  return (
    <div className="ml-[10px] mr-[10px] mt-[8px] flex w-[480px] shrink-0 flex-col border-2 border-b-0 border-[#cdcdcd] bg-[#f7f9f8] text-[17px]">
      <div className="h-[6px] shrink-0 bg-[#0078d0]" />
      <div className="flex h-[32px] shrink-0 items-center pl-[8px] pr-[8px]">
        <span className="text-[22.200px] text-[#0078d0]">Format Table Frame</span>
        <PanelButtons />
      </div>
      <div className="ml-[182px] mt-[11px] h-[34px] text-[21px] leading-[34px]">Table Frame</div>
      <div className="mt-[10px] flex h-[34px] shrink-0 items-center pl-[10px]">
        <div className="h-[34px] border-b-[3px] border-[#0079c1] text-[18px] font-bold leading-[28px] tracking-[-0.300px]">Table Frame</div>
        <svg width="11" height="6" viewBox="0 0 11 6" className="ml-[24px]"><path d="M0 0h11L5.500 6z" fill="#505050" /></svg>
        <span className="ml-[26px] pb-[6px] text-[18.200px]">Text Symbol</span>
      </div>
      <div className="mt-[27px] flex h-[54px] shrink-0 pl-[17px] pt-[4px]">
        <svg width="34" height="36" viewBox="0 0 34 36">
          <path d="M1 2h29v31H1z" fill="#fbfbfb" stroke="#777" strokeWidth="1.800" />
          <path d="M4 9h7M4 12h7M4 15h7M4 18h7M4 21h7M4 24h14M4 27h22M4 30h22" stroke="#4ba3dd" strokeWidth="1.300" />
          <path d="M12 7h21v16H17l-4 5V7z" fill="#fff" stroke="#777" strokeWidth="1.600" />
          <path d="M14 11h3v3h-3zM14 17h3v3h-3z" fill="#7a62ad" />
          <path d="M19 12.500h12M19 18.500h12" stroke="#777" strokeWidth="1.300" />
        </svg>
        <svg width="36" height="36" viewBox="0 0 36 36" className="ml-[11px]">
          <path d="M3 32V3h28" fill="none" stroke="#4ba3dd" strokeWidth="1.600" />
          <path d="M30 0l6 3-6 3zM0 28l3 6 3-6z" fill="#4ba3dd" />
          <g transform="translate(8 7) scale(.58)">
            <rect x="1.500" y="1.500" width="45" height="46" fill="#fff" stroke="#777" strokeWidth="3" />
            <rect x="5" y="5" width="38" height="7" fill="#5aa9e0" />
            <path d="M5 13h38M5 22h38M5 30h38M5 38h38M14 13v31M24 13v31M34 13v31M5 5v38h38V5z" fill="none" stroke="#777" strokeWidth="2" />
          </g>
        </svg>
        <svg width="34" height="36" viewBox="0 0 34 36" className="ml-[13px]">
          <rect x="1" y="3" width="32" height="31" fill="none" stroke="#555" strokeWidth="1.600" strokeDasharray="2 1.600" />
          <path d="M28 7L13 24" stroke="#666" strokeWidth="3.500" />
          <path d="M14 23c-2 5-4 7-9 6 2-2 2-4 4-6z" fill="#b5793a" />
        </svg>
        <svg width="36" height="36" viewBox="0 0 36 36" className="ml-[13px]">
          <path d="M7 2h28M7 0v5M35 0v5M2.500 8v27M0 7h5M0 35h5" fill="none" stroke="#666" strokeWidth="1.600" />
          <path d="M7 8h21l7 7v20H7z" fill="#fbfbfb" stroke="#777" strokeWidth="1.800" />
          <path d="M10 11h16l6 6v10H10z" fill="#a9d4ef" />
          <path d="M15 25l4-6 6-3 2 5-4 5z" fill="#dceffa" />
          <path d="M28 8v7h7" fill="#fff" stroke="#777" strokeWidth="1.600" />
        </svg>
      </div>
      <div className="-mt-[2px] ml-[8px] flex h-[4px] w-[192px] shrink-0">
        <div className="w-[48px] bg-[#0079c1]" />
        <div className="mt-[1px] h-[2px] flex-1 bg-[#c8c8c8]" />
      </div>
      <div className="ml-[8px] mt-[20px] h-[30px] shrink-0 text-[20px] font-semibold leading-[30px]">Options</div>
      <div className="mt-[1px] flex h-[28px] shrink-0 items-center pl-[17px] text-[17.800px] font-semibold"><Chevron open={false} />General</div>
      <div className="mt-[17px] flex h-[28px] shrink-0 items-center pl-[17px] text-[17.800px] font-semibold"><Chevron open />Source</div>
      <SelectRow
        className="mt-[1px]"
        label="Map frame"
        value="Map Frame"
        icon={<svg width="22" height="22" viewBox="0 0 22 22"><MiniMap x={1} y={1} w={20} h={20} sw={1} stroke="#b5b5b5" /></svg>}
      />
      <SelectRow
        className="mt-[18px]"
        label="Table"
        value="<None>"
        focus
        icon={
          <svg width="24" height="22" viewBox="0 0 24 22" className="-ml-[2px]">
            <rect x="1" y="1" width="22" height="20" fill="#f1f8f0" stroke="#67a66b" strokeWidth="2" />
            <path d="M2 3.500h20" stroke="#67a66b" strokeWidth="3" />
            <path d="M2 8h20M2 12h20M2 16h20M7 5v16M12 5v16M17 5v16" stroke="#67a66b" strokeWidth="1.200" />
          </svg>
        }
      />
      <SelectRow className="mt-[9px]" label="Query" value="Visible rows" />
      <div className="mt-[20px] flex h-[28px] shrink-0 items-center pl-[17px] text-[17.800px] font-semibold"><Chevron open />Fields</div>
      <div className="ml-[38px] mt-[11px] flex h-[36px] w-[175px] shrink-0 items-center justify-center border-2 border-[#4c4c4c] bg-[#fbfcfb] text-[16.800px]">Show properties...</div>
    </div>
  );
}

/* ---------- layout canvas ---------- */

const STEP = 77.06;

function HorizontalRuler() {
  const x0 = 1507.9 - 725;
  const ticks: React.ReactNode[] = [];
  for (let k = -10 * 8 - 1; k <= 23 * 8 + 3; k++) {
    const x = Math.round(x0 + (k * STEP) / 8) + 0.5;
    const top = k % 8 === 0 ? 0 : k % 4 === 0 ? 16 : k % 2 === 0 ? 18 : 19;
    ticks.push(<path key={k} d={`M${x} ${top}V29`} stroke="#555" strokeWidth="1" />);
    if (k % 8 === 0) {
      ticks.push(
        <text key={`t${k}`} x={x + 6.5} y={15.5} fontSize="16" fill="#757575">
          {k / 8}
        </text>,
      );
    }
  }
  return (
    <svg width="2588" height="30" viewBox="0 0 2588 30" className="block shrink-0 bg-[#f8faf9]">
      {ticks}
      <rect x="1" y="1" width="2586" height="27.500" fill="none" stroke="#4f4f4f" strokeWidth="1.600" />
      <path d="M58.500 1V29" stroke="#444" strokeWidth="1" strokeDasharray="1.500 1.500" />
    </svg>
  );
}

function VerticalRuler() {
  const y0 = 1634.2 - 305;
  const ticks: React.ReactNode[] = [];
  for (let k = -20; k <= 17 * 8 + 1; k++) {
    const y = Math.round(y0 - (k * 77.03) / 8) + 0.5;
    const left = k % 8 === 0 ? 0 : k % 4 === 0 ? 15 : k % 2 === 0 ? 16 : 18;
    ticks.push(<path key={k} d={`M${left} ${y}H28`} stroke="#555" strokeWidth="1" />);
    if (k % 8 === 0) {
      ticks.push(
        <text key={`t${k}`} transform={`translate(13.500 ${y - 6}) rotate(-90)`} fontSize="16" fill="#757575">
          {k / 8}
        </text>,
      );
    }
  }
  return (
    <svg width="29" height="1527" viewBox="0 0 29 1527" className="block shrink-0 bg-[#f8faf9]">
      {ticks}
      <path d="M0 1H28.500M1 0V1527M28 0V1527" stroke="#4f4f4f" strokeWidth="1.500" />
      <path d="M0 105.500H28" stroke="#444" strokeWidth="1" strokeDasharray="1.500 1.500" />
    </svg>
  );
}

/* circles are [cx, cy, r, kind] in the map's drawing units */
type Dot = [number, number, number, "y" | "r" | "p" | "g"];
const DOTS: Dot[] = [
  [280, 214, 13, "y"], [283, 257, 15, "y"], [124, 560, 20, "y"], [271, 575, 10, "y"], [307, 434, 14, "y"],
  [455, 363, 9, "y"], [493, 424, 26, "y"], [484, 465, 33, "y"], [349, 501, 22, "y"], [382, 494, 23, "y"],
  [453, 528, 46, "y"], [510, 552, 52, "y"], [361, 617, 36, "y"], [711, 622, 48, "y"], [643, 713, 35, "y"],
  [487, 660, 33, "y"], [575, 632, 28, "y"], [620, 625, 32, "y"], [432, 748, 34, "y"], [470, 752, 30, "y"],
  [530, 755, 25, "y"], [388, 783, 25, "y"], [316, 818, 32, "y"], [552, 881, 27, "y"], [577, 910, 34, "y"],
  [334, 268, 12, "p"], [349, 346, 13, "p"], [388, 368, 11, "p"], [352, 420, 12, "p"], [445, 412, 12, "p"],
  [412, 453, 17, "p"], [321, 461, 14, "p"], [555, 691, 27, "p"], [577, 772, 22, "p"], [52, 563, 8, "p"],
  [388, 331, 8, "g"], [412, 395, 10, "g"], [477, 387, 8, "g"], [352, 461, 12, "g"],
  [338, 347, 8, "r"], [341, 394, 17, "r"], [465, 440, 9, "r"], [454, 505, 40, "r"], [520, 607, 49, "r"],
  [637, 586, 40, "r"], [492, 706, 32, "r"], [406, 817, 25, "r"],
];
const FILL = { y: "#ffff66", r: "#ff2a2a", p: "#6b2560", g: "#1c7d63" };

function MapArt({ grow }: { grow: number }) {
  return (
    <svg width="256" height="384" viewBox="11 7 771 1155" className="block">
      <rect x="11" y="7" width="771" height="1156" fill="#efefef" />
      <path
        d="M11 7H782V204C740 160 690 125 655 92C630 86 612 92 612 110L608 150L556 170V205L600 217L640 217C660 240 672 258 690 285L700 308L640 370L600 440L592 540H586C580 470 560 400 510 365C460 345 420 320 395 300C350 250 330 220 300 180C270 140 210 95 180 86C160 78 134 82 133 92C150 115 180 150 205 235C205 330 180 370 160 430C130 440 80 470 52 545C60 600 50 665 11 686V435C60 400 120 345 122 260C110 180 80 130 50 100C30 70 20 40 11 20Z"
        fill="#d0d0d0"
      />
      <path d="M700 308L782 380V346L730 322ZM650 365L735 460L655 390ZM640 380L700 490L628 410Z" fill="#d0d0d0" />
      <path d="M140 940l20-5 5 30-5 30 25 20 3 45-15 3-20-35-30-40 5-20zM155 1098c5-12 35-12 38 2l-3 35-15 15-20-15zM20 1150l20-15 20 27H15z" fill="#c9c9c9" />
      <g fill="none" stroke="#cfcfcf" strokeWidth="2.500">
        <path d="M612 135l15-15 8 10h30l5-20 10 25h22v-35M685 160h15v18h45v-35M163 480v230M207 545v105h-22v42h60v-40M292 610v250M285 862v32l165 4M450 990h183V862M12 854l100-20 60-20 100-5M290 862h390v10h8v-10M745 860l8-280M435 985h10v10M385 1045h32v28h-32zM318 1163l8-90M520 1163l5-80h60" />
        <path d="M255 630c30-10 45 20 10 25" />
      </g>
      <g fill="none" stroke="#fff">
        <path d="M180 14C290 110 470 120 600 10L782 200" strokeWidth="2" opacity=".4" />
        <path d="M300 180C400 310 480 340 520 370C570 420 575 500 590 600C600 640 540 690 500 760L460 860C450 950 400 1010 385 1030L232 1163" strokeWidth="6" />
        <path d="M548 395C575 440 570 500 600 620M540 380C565 420 575 480 580 560" strokeWidth="4" />
        <path d="M11 158L68 310L170 445L255 452L320 585L385 605L470 615H590L700 535L782 525" strokeWidth="6" />
        <path d="M590 600L640 545L782 540M385 1022L450 1050L600 1060L782 1066M430 1050L520 1075L782 1088" strokeWidth="5" />
        <path
          d="M222 365L225 290L240 200M250 370H400M165 400L250 395H400M165 463H330M165 541H600M160 673H400M160 715L180 800L235 815L290 862H782M380 640V860M372 860V1060M458 860V985M575 900V1163M11 930C60 935 100 905 170 935H370M228 820V970L280 1020V1130M140 1110L160 1085L220 1065V975M270 1003H370M11 1108H140M255 370V540M525 790V900M165 725L235 755L370 770M700 310L782 340M715 400L600 520M700 390L740 420M430 1060L440 1100L465 1105V1163"
          strokeWidth="3"
          opacity=".9"
        />
      </g>
      <g fill="#f7f7e6" stroke="#eeee90" strokeWidth="4" fillOpacity=".7">
        <path d="M243 187h32v20h26v30h25v80h-45v-42h-20v-22h-18z" />
        <path d="M167 466h8v80l6 35-20 6v40h-50l-5 5H76l-2-28-18-27 12-30 15-25 30-25 22-33h32z" />
        <path d="M251 545h41v60h-25l-14-6zM387 671h32v48h-32zM541 780h22v207h-22zM570 830h17v157h-17zM318 322h12v52h-12zM590 685h15v50h-15zM318 486h38l15 45 18-20 25-30M632 750h25v65h-22l-7-60zM635 630h22v60" />
        <path d="M340 650l5-20h40M540 762h-60v20h60M290 792h40v50h-40zM690 600h50v40h-50zM520 470v30h10v-30" />
      </g>
      <g fill="#e9dbe8" stroke="#b48aac" strokeWidth="5">
        <path d="M332 325h34v30h-34zM318 300h14v18h-14zM326 405h55v60h-55zM372 355h32v30h-32zM404 420h36v65h-36zM306 448h52v35h-52zM530 660h52v60h-52zM560 725h30v98h-22v-60zM338 365h30v35h-30z" />
        <path d="M334 408h12v70M366 405v60M324 290l20-20M49 525l10 30-10 40v25" fill="none" strokeWidth="3" />
      </g>
      <g fill="#d6f0e8" stroke="#5bbfa9" strokeWidth="5">
        <path d="M343 308l35-3 10 12h18l5 18h15l10 35-20 10 10 25-35 5v-25l10-15-20-25-25-15-13-20zM456 385l20-8 18 3 18-3-5 25-30-5z" />
      </g>
      <g fill="#ffd9d9" stroke="#f1808a" strokeWidth="5">
        <path d="M536 462h14l14 95-12 10zM398 630l8-20 45-8 12 10-5 20zM380 800h48v52h-50zM360 390h20v14h-20zM540 600l60-20 60-8v20l-60 12zM606 640l15 25-12 28" />
      </g>
      {DOTS.map(([x, y, r, k], i) => (
        <circle
          key={i}
          cx={x}
          cy={y}
          r={r > 12 ? r + grow : r}
          fill={FILL[k]}
          fillOpacity={k === "y" ? 0.78 : r > 24 ? 0.65 : 0.8}
          stroke={k === "y" ? "none" : k === "r" ? "#ee1c24" : FILL[k]}
          strokeWidth="2.500"
        />
      ))}
    </svg>
  );
}

const HANDLES = [
  "left-[21px] top-[508px] bg-[#333]",
  "left-[317px] top-[508px] bg-white",
  "left-[612px] top-[508px] bg-white",
  "left-[21px] top-[561px] bg-white",
  "left-[612px] top-[561px] bg-white",
  "left-[21px] top-[614px] bg-white",
  "left-[317px] top-[614px] bg-white",
  "left-[612px] top-[614px] bg-white",
];

function LayoutSheet() {
  const year = "absolute whitespace-nowrap font-bold text-[15px] leading-[20px] text-black";
  const title = "absolute whitespace-nowrap font-['DejaVu_Sans',sans-serif] font-bold text-[15.200px] leading-[20px] text-black [font-stretch:normal]";
  return (
    <div className="absolute left-[782px] top-[672px] h-[658px] w-[851px] border-2 border-[#b0b0b0] bg-white font-['DejaVu_Sans_Condensed','DejaVu_Sans',sans-serif] text-black shadow-[0_0_2px_1px_#c8c8c8] [font-stretch:condensed]">
      <div className={`${title} left-[25px] top-[13px]`}>Percent Persons Of Color in HOLC Neighborhoods:</div>
      <div className={`${title} left-[25px] top-[34px]`}>Census Years 2000, 2010, 2020</div>
      <div className="absolute left-[25px] top-[63px] border border-black"><MapArt grow={0} /></div>
      <div className="absolute left-[295px] top-[63px] border border-black"><MapArt grow={2} /></div>
      <div className="absolute left-[564px] top-[63px] border border-black"><MapArt grow={-1} /></div>
      <div className={`${year} left-[25px] top-[449px]`}>2000</div>
      <div className={`${year} left-[295px] top-[449px]`}>2010</div>
      <div className={`${year} left-[564px] top-[449px]`}>2020</div>
      <div className={`${title} left-[25px] top-[490px]`}>Percent Persons Of Color</div>
      <div className="absolute left-[25px] top-[619px] whitespace-nowrap text-[11.300px] leading-[14px] tracking-[-0.370px]">
        Citation: IPUMS NHGIS, University of Minnesota, www.<span className="underline decoration-[#e33] decoration-wavy decoration-1">nhgis</span>.org.&nbsp; U.S. Census Bureau 2000, 2010, 2020. Pierce County Washington.
      </div>
      <div className="absolute left-[25px] top-[512px] flex h-[107px] w-[592px] items-center justify-center border border-[#222]">
        <div className="whitespace-nowrap border border-[#444] bg-[#fafaf2] px-[2px] text-[15px] leading-[20px] tracking-[-0.100px]">Table Frame</div>
      </div>
      {HANDLES.map((h) => (
        <div key={h} className={`absolute size-[8px] border-2 border-[#333] ${h}`} />
      ))}
      <svg width="120" height="160" viewBox="2110 1440 120 160" className="absolute left-[602px] top-[461px] overflow-visible">
        <g fill="#e8262c">
          <path d="M2134 1444h2.500v2.500h-2.500zM2138 1444h2.500v2.500h-2.500zM2142 1444h2.500v2.500h-2.500zM2221 1504h2.500v2.500h-2.500zM2225 1504h2.500v2.500h-2.500zM2229 1504h2.500v2.500h-2.500z" />
        </g>
        <g fontSize="9" fill="#222">
          <text x="2124.500" y="1470" textLength="47">MAP_CLASS</text>
          <text x="2124.500" y="1506" textLength="93">Percent_POC_2000_rou</text>
        </g>
        <g fontSize="6.500" fill="#333">
          <text x="2143" y="1481.500">1; 2; 3</text>
          <text x="2143" y="1492.500">4; 5; 6</text>
          <text x="2148.500" y="1517">1</text>
          <text x="2148.500" y="1528">5</text>
          <text x="2148.500" y="1539">10</text>
          <text x="2148.500" y="1554">25</text>
          <text x="2153" y="1580">50</text>
        </g>
        <g fill="#ff7f7f" stroke="#f02020" strokeWidth="1.200">
          <circle cx="2134" cy="1514.500" r="2" />
          <circle cx="2134" cy="1525.500" r="2.200" />
          <circle cx="2134" cy="1536.500" r="3.600" />
          <circle cx="2134" cy="1551.500" r="7.800" />
          <circle cx="2139.500" cy="1577.500" r="14" />
        </g>
      </svg>
      <svg width="36" height="20" viewBox="0 0 36 20" className="absolute left-[808px] top-[605px]">
        <path d="M5 1H1v18h4M31 1h4v18h-4" fill="none" stroke="#d9562b" strokeWidth="1.800" />
        <path d="M8 8.500h3.500v3.500H8zM16.500 8.500H20v3.500h-3.500zM25 8.500h3.500v3.500H25z" fill="#d9562b" />
      </svg>
    </div>
  );
}

function Tooltip() {
  return (
    <div className="absolute left-[659px] top-[2px] z-10 h-[183px] w-[441px] border border-[#bdbdbd] bg-white pl-[15px] pt-[10px] text-[17px] leading-[25px] text-[#5c5c5c] shadow-[0_0_4px_3px_#bcbcbc]">
      <div className="whitespace-nowrap text-[16.500px] font-bold">New Table Frame</div>
      <div className="mt-[13px] whitespace-nowrap">
        Drag a rectangle to create a new table frame on the
        <br />
        layout.
      </div>
      <div className="mt-[25px] whitespace-nowrap">
        <span className="pl-[60px]">Specify the associated layer or standalone</span>
        <br />
        table by selecting it in the Contents pane.
      </div>
    </div>
  );
}

function DocTabs() {
  return (
    <div className="flex h-[33px] shrink-0 items-center whitespace-nowrap text-[17px] text-[#222]">
      <div className="ml-[9px] flex w-[138px] items-center gap-[9px] pt-[3px]"><CatalogCase kind="open" w={23} />Catalog</div>
      <div className="flex w-[384px] items-center gap-[7px] pt-[3px]"><LayoutPage size={24} />HOLC_Neighborhoods_TotalPopulation</div>
      <div className="flex w-[200px] items-center gap-[7px] overflow-hidden pt-[3px]">
        <svg width="24" height="24" viewBox="0 0 24 24" className="shrink-0"><MiniMap x={1} y={1} w={22} h={22} /></svg>
        Percent_POC_2000
      </div>
      <div className="flex w-[461px] justify-end pr-[36px] pt-[3px]"><span>Percent_POC_2020</span></div>
      <div className="flex h-[33px] w-[354px] items-center bg-[#c8c8c8] pl-[10px] pt-[3px] text-[#757575]">
        <LayoutPage size={24} />
        <span className="ml-[7px]">HOLC_Neighborhoods_PercentPOC</span>
        <svg width="12" height="12" viewBox="0 0 12 12" className="mb-[3px] ml-auto mr-[10px]"><path d="M0 0l12 12M12 0L0 12" stroke="#777" strokeWidth="2" /></svg>
      </div>
      <svg width="12" height="7" viewBox="0 0 12 7" className="ml-auto mr-[5px] mt-[6px]"><path d="M0 0h12L6 7z" fill="#7a7a7a" /></svg>
    </div>
  );
}

function LayoutView() {
  return (
    <div className="relative ml-[8px] mt-[8px] flex w-[2647px] shrink-0 flex-col">
      <DocTabs />
      <div className="h-[4px] shrink-0 bg-[#cdcdcd]" />
      <div className="flex h-[30px] w-[2647px] shrink-0 border-l-2 border-[#c4c4c4] bg-[#f8faf9]">
        <div className="w-[29px] shrink-0" />
        <HorizontalRuler />
      </div>
      <div className="flex flex-1">
        <div className="w-[2px] shrink-0 bg-[#c4c4c4]" />
        <VerticalRuler />
        <div className="flex-1 border-t border-[#f5f5f5] bg-[#e0e0de]" />
        <div className="flex w-[27px] shrink-0 flex-col items-center border-r border-[#cdcdcd] bg-[#ebebeb]">
          <svg width="11" height="7" viewBox="0 0 11 7" className="mt-[11px] shrink-0"><path d="M1 6l4.500-5L10 6" fill="none" stroke="#555" strokeWidth="1.600" /></svg>
          <div className="mt-[144px] h-[1204px] w-[14px] shrink-0 rounded-full bg-[#b3b3b3]" />
        </div>
      </div>
      <div className="absolute left-[30px] top-[67px] h-[1527px] w-[2588px]">
        <LayoutSheet />
      </div>
      <Tooltip />
    </div>
  );
}

export default function App() {
  return (
    <div className="flex h-[1832px] w-[3840px] flex-col overflow-hidden bg-[#f1f1f1] font-['Open_Sans','Noto_Sans',sans-serif] text-[17px] text-[#4c4c4c]">
      <TitleBar />
      <MenuTabs />
      <Ribbon />
      <div className="flex min-h-0 flex-1">
        <ContentsPanel />
        <LayoutView />
        <FormatPanel />
      </div>
    </div>
  );
}
